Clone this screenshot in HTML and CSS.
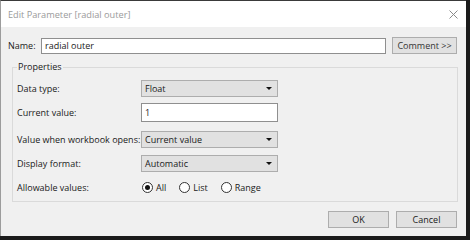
FILE: index.html
```html
<!DOCTYPE html>
<html>
<head>
<meta charset="utf-8">
<link rel="stylesheet" href="styles.css">
</head>
<body>
<div class="window">
  <div class="titlebar">
    <span class="title">Edit Parameter [radial outer]</span>
    <svg class="close" width="9" height="9" viewBox="0 0 9 9"><path d="M0.5 0.5 L8.5 8.5 M8.5 0.5 L0.5 8.5" stroke="#8a8a8a" stroke-width="1" fill="none"/></svg>
  </div>
  <div class="content">
    <div class="name-row">
      <span class="name-label">Name:</span>
      <div class="textbox name-input">radial outer</div>
      <div class="button comment">Comment &gt;&gt;</div>
    </div>
    <fieldset class="group">
      <legend>Properties</legend>
      <div class="props">
        <span class="label r1">Data type:</span>
        <div class="select r1"><span>Float</span><span class="arrow"></span></div>
        <span class="label r2">Current value:</span>
        <div class="textbox value r2">1</div>
        <span class="label r3">Value when workbook opens:</span>
        <div class="select r3"><span>Current value</span><span class="arrow"></span></div>
        <span class="label r4">Display format:</span>
        <div class="select r4"><span>Automatic</span><span class="arrow"></span></div>
        <span class="label r5">Allowable values:</span>
        <div class="radios r5">
          <span class="radio checked"></span><span class="rtext">All</span>
          <span class="radio"></span><span class="rtext">List</span>
          <span class="radio"></span><span class="rtext">Range</span>
        </div>
      </div>
    </fieldset>
    <div class="footer">
      <div class="button action">OK</div>
      <div class="button action">Cancel</div>
    </div>
  </div>
</div>
</body>
</html>
```

FILE: styles.css
```css
html, body {
  margin: 0;
  padding: 0;
  background: #1b1b1b;
  width: 470px;
  height: 240px;
  overflow: hidden;
}
.window {
  width: 465px;
  height: 235px;
  background: #f0f0f0;
  border-left: 1px solid #9c9c9c;
  border-top: 1px solid #3a3a3a;
  font-family: "Open Sans", "Noto Sans", sans-serif;
  font-size: 9px;
  color: #1a1a1a;
  white-space: nowrap;
  display: flex;
  flex-direction: column;
}
.titlebar {
  height: 26px;
  background: #ffffff;
  display: flex;
  align-items: center;
  justify-content: space-between;
  padding: 0 8px 0 7px;
}
.title {
  color: #9a9a9a;
  font-size: 9.2px;
}
.close {
  display: block;
}
.content {
  padding: 10px 9px 0 7px;
  display: flex;
  flex-direction: column;
}
.name-row {
  display: flex;
  align-items: center;
  height: 17px;
}
.name-label {
  width: 33px;
}
.textbox {
  box-sizing: border-box;
  background: #fff;
  border: 1px solid #8f8f8f;
  padding: 0 3px;
  display: flex;
  align-items: center;
}
.name-input {
  width: 345px;
  height: 16px;
}
.button {
  box-sizing: border-box;
  background: #e1e1e1;
  border: 1px solid #adadad;
  display: flex;
  align-items: center;
  justify-content: center;
}
.comment {
  margin-left: 6px;
  width: 65px;
  height: 17px;
  color: #333;
}
.group {
  margin: 6px 0 0 4px;
  padding: 0 0 0 4px;
  width: 446px;
  height: 142px;
  box-sizing: border-box;
  border: 1px solid #dadada;
  min-inline-size: 0;
}
.group legend {
  padding: 0 1px;
  margin-left: 0;
  line-height: 14px;
  height: 14px;
}
.props {
  display: grid;
  grid-template-columns: 124px 137px;
  grid-template-rows: 23px 28px 24px 24px 18px;
  margin-top: 6px;
  align-items: start;
}
.label {
  grid-column: 1;
  height: 17px;
  display: flex;
  align-items: center;
}
.r2.label { height: 19px; }
.r1 { grid-row: 1; }
.r2 { grid-row: 2; }
.r3 { grid-row: 3; }
.r4 { grid-row: 4; }
.r5 { grid-row: 5; }
.select {
  grid-column: 2;
  box-sizing: border-box;
  height: 17px;
  background: #e1e1e1;
  border: 1px solid #adadad;
  display: flex;
  align-items: center;
  justify-content: space-between;
  padding: 0 5px 0 3px;
}
.arrow {
  width: 0;
  height: 0;
  border-left: 3px solid transparent;
  border-right: 3px solid transparent;
  border-top: 3px solid #111;
}
.value {
  grid-column: 2;
  height: 19px;
}
.radios {
  grid-column: 2;
  display: flex;
  align-items: center;
  height: 17px;
  padding-left: 1px;
}
.radio {
  box-sizing: border-box;
  width: 11px;
  height: 11px;
  border: 1px solid #333;
  border-radius: 50%;
  background: #fff;
  display: flex;
  align-items: center;
  justify-content: center;
}
.radio.checked::after {
  content: "";
  width: 5px;
  height: 5px;
  border-radius: 50%;
  background: #111;
}
.rtext {
  margin: 0 13px 0 3px;
}
.footer {
  display: flex;
  justify-content: flex-end;
  gap: 7px;
  margin-top: 9px;
}
.action {
  width: 61px;
  height: 17px;
}
```
